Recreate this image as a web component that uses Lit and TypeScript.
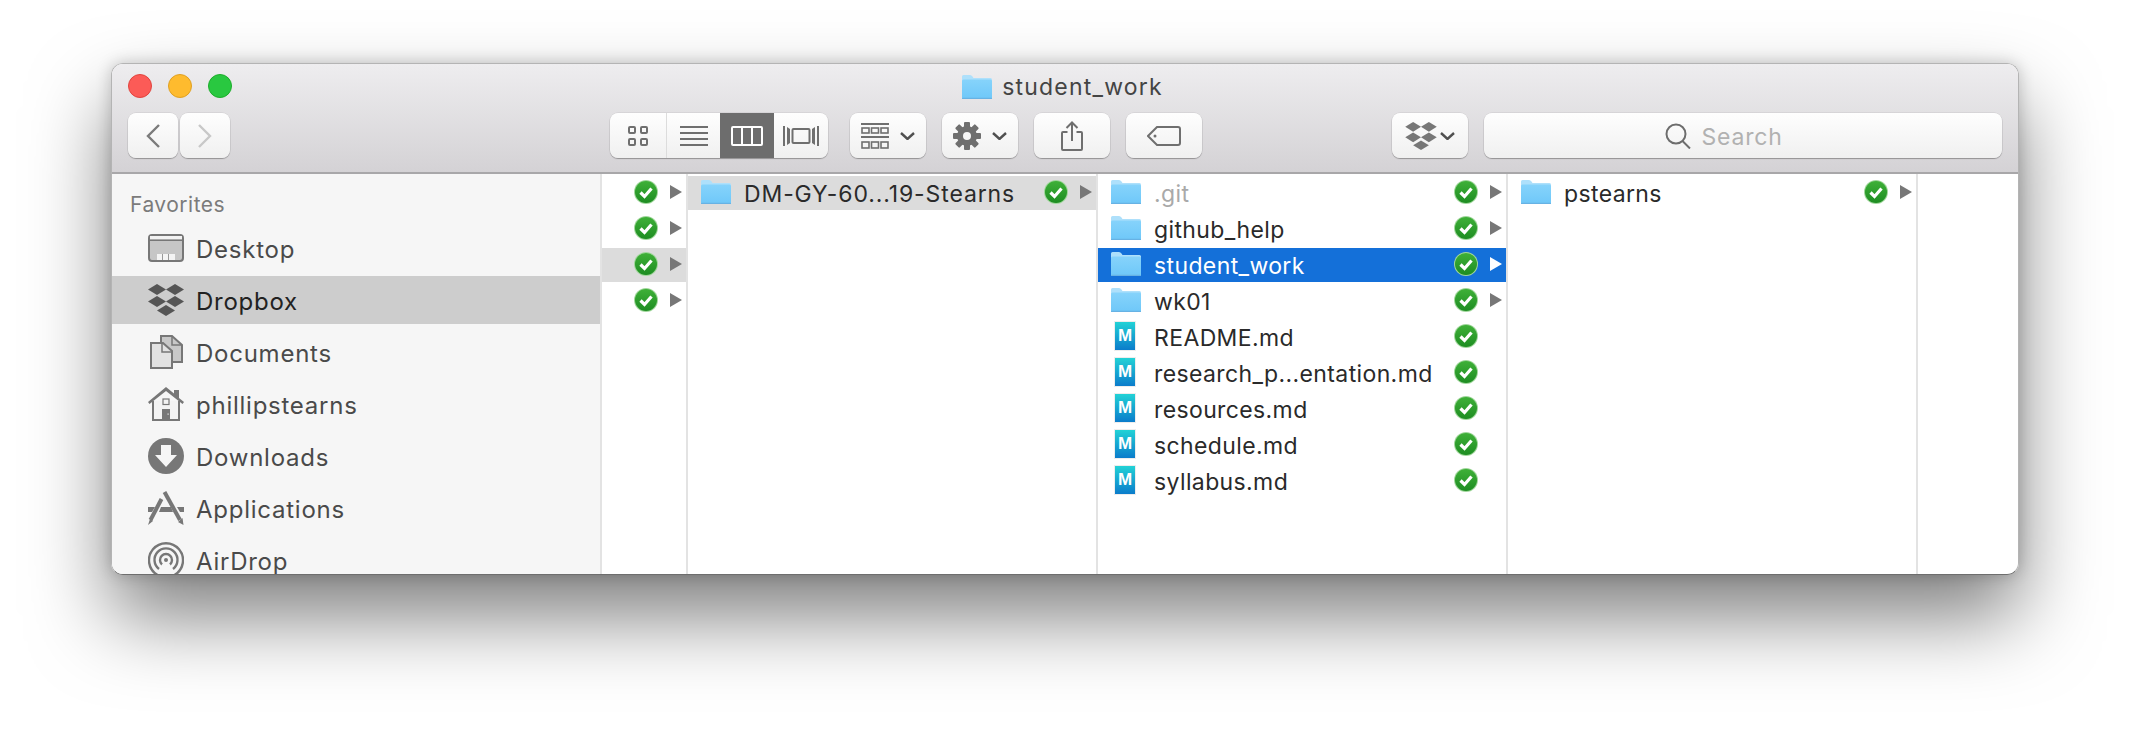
import { LitElement, css, html } from 'lit';
import { customElement } from 'lit/decorators.js';

const folderIcon = () => html`
  <svg class="file-icon" width="30" height="24" viewBox="0 0 30 24">
    <defs>
      <linearGradient id="folder-fill" x1="0" y1="0" x2="0" y2="1">
        <stop offset="0" stop-color="#86d3fb" />
        <stop offset="1" stop-color="#6fc8f9" />
      </linearGradient>
    </defs>
    <path d="M1 24 Q0 24 0 23 V1.5 Q0 0 1.5 0 H8 Q9.5 0 10.5 1.5 L11.5 3 H28.5 Q30 3 30 4.5 V23 Q30 24 29 24 Z" fill="#aee0fb" />
    <path d="M0 6 Q0 4.500 1.500 4.500 H28.500 Q30 4.500 30 6 V22.500 Q30 23.500 29 23.500 H1 Q0 23.500 0 22.500 Z" fill="url(#folder-fill)" />
    <rect x="0" y="22.700" width="30" height="1.300" rx=".6" fill="#67b2e4" />
  </svg>
`;

const checkBadge = () => html`
  <svg class="badge" width="24" height="24" viewBox="0 0 24 24">
    <defs>
      <linearGradient id="badge-fill" x1="0" y1="0" x2="0" y2="1">
        <stop offset="0" stop-color="#3fb038" />
        <stop offset="1" stop-color="#1e8d22" />
      </linearGradient>
    </defs>
    <circle cx="12" cy="12" r="12" fill="#9fd69a" />
    <circle cx="12" cy="12" r="11" fill="url(#badge-fill)" />
    <path d="M6.500 12.500 L10.500 16.500 L17.500 8.500" fill="none" stroke="#fff" stroke-width="3.200" />
  </svg>
`;

const markdownIcon = () => html`<span class="md"><span class="md-letter">M</span></span>`;

const dropboxLogo = (w: number, h: number) => html`
  <svg width=${w} height=${h} viewBox="0 0 36 32" fill="currentColor">
    <path d="M9 0 L18 5.500 L9 11 L0 5.500 Z" />
    <path d="M27 0 L36 5.500 L27 11 L18 5.500 Z" />
    <path d="M9 12 L18 17.500 L9 23 L0 17.500 Z" />
    <path d="M27 12 L36 17.500 L27 23 L18 17.500 Z" />
    <path d="M18 21 L27 26.500 L18 32 L9 26.500 Z" />
  </svg>
`;

const chevron = () => html`
  <svg class="chevron" width="15" height="8" viewBox="0 0 15 8">
    <path d="M1 1 L7.500 7 L14 1" fill="none" stroke="#505050" stroke-width="2.400" />
  </svg>
`;

const SIDEBAR_ICONS: Record<string, () => unknown> = {
  desktop: () => html`
    <svg width="36" height="28" viewBox="0 0 36 28">
      <rect x="1" y="1" width="34" height="26" rx="3" fill="#c6c6c6" stroke="#777" stroke-width="2" />
      <rect x="2" y="2" width="32" height="3.500" fill="#f2f2f2" />
      <rect x="2" y="5.500" width="32" height="1.500" fill="#777" />
      <rect x="9" y="20" width="18" height="6" fill="#f4f4f4" />
      <rect x="14" y="20" width="1" height="6" fill="#999" />
      <rect x="20" y="20" width="1" height="6" fill="#999" />
    </svg>
  `,
  dropbox: () => html`<span class="logo-dark">${dropboxLogo(36, 32)}</span>`,
  documents: () => html`
    <svg width="36" height="34" viewBox="0 0 36 34">
      <path d="M13 1 H24 L34 10 V27 H13 Z" fill="#c8c8c8" stroke="#777" stroke-width="2" />
      <path d="M24 1 V10 H34" fill="none" stroke="#777" stroke-width="1.500" />
      <path d="M3 8 H15 L24 16 V33 H3 Z" fill="#e2e2e2" stroke="#777" stroke-width="2" />
      <path d="M14 8 V17 H24" fill="none" stroke="#777" stroke-width="1.500" />
    </svg>
  `,
  home: () => html`
    <svg width="36" height="34" viewBox="0 0 36 34">
      <path d="M5 14 V33 H31 V14" fill="#f3f3f3" stroke="#777" stroke-width="2" />
      <path d="M0 15 L18 0 L26 6.500 V3 H31 V11 L36 15 L34.500 17 L18 4 L1.500 17 Z" fill="#777" />
      <rect x="15" y="12" width="6" height="5.500" fill="#f3f3f3" stroke="#777" stroke-width="1.200" />
      <rect x="14" y="22" width="8" height="11" fill="#777" />
      <rect x="19.500" y="26.500" width="1.200" height="1.200" fill="#eee" />
    </svg>
  `,
  downloads: () => html`
    <svg width="36" height="36" viewBox="0 0 36 36">
      <circle cx="18" cy="18" r="18" fill="#777" />
      <path d="M13 7 H23 V17 H29 L18 29 L7 17 H13 Z" fill="#f6f6f6" />
    </svg>
  `,
  applications: () => html`
    <svg width="36" height="34" viewBox="0 0 36 34">
      <path d="M0 16 H7 L4 21 H0 Z M13 16 H23 L25 21 H11 Z M29 16 H36 V21 H32 Z" fill="#777" />
      <path d="M13.500 8 L2.500 29" stroke="#777" stroke-width="4" fill="none" />
      <path d="M2 28 L0 34 L5 30 Z" fill="#777" />
      <path d="M16.500 1 L32 29" stroke="#777" stroke-width="4" fill="none" />
      <path d="M30 31 L35.500 34 L34.500 27 Z" fill="#777" />
    </svg>
  `,
  airdrop: () => html`
    <svg width="36" height="36" viewBox="0 0 36 36" fill="none" stroke="#777" stroke-width="2.400">
      <path d="M9.500 33 A17 17 0 1 1 26.500 33" />
      <path d="M11 27 A11.500 11.500 0 1 1 25 27" />
      <path d="M14 22.500 A6 6 0 1 1 22 22.500" />
      <circle cx="18" cy="18" r="2" fill="#777" stroke="none" />
    </svg>
  `,
};

const FAVORITES = [
  { icon: 'desktop', label: 'Desktop' },
  { icon: 'dropbox', label: 'Dropbox', active: true },
  { icon: 'documents', label: 'Documents' },
  { icon: 'home', label: 'phillipstearns' },
  { icon: 'downloads', label: 'Downloads' },
  { icon: 'applications', label: 'Applications' },
  { icon: 'airdrop', label: 'AirDrop' },
];

const FILES = [
  { name: '.git', dir: true, dim: true },
  { name: 'github_help', dir: true },
  { name: 'student_work', dir: true, selected: true },
  { name: 'wk01', dir: true },
  { name: 'README.md' },
  { name: 'research_p...entation.md' },
  { name: 'resources.md' },
  { name: 'schedule.md' },
  { name: 'syllabus.md' },
];

interface RowOpts {
  dir?: boolean;
  dim?: boolean;
  selected?: boolean;
  muted?: boolean;
  tracked?: boolean;
}

@customElement('app-root')
export class AppRoot extends LitElement {
  private row(name: string, opts: RowOpts = {}) {
    const cls = [
      'row',
      opts.selected ? 'selected' : '',
      opts.muted ? 'muted' : '',
      opts.dim ? 'dim' : '',
      opts.tracked ? 'tracked' : '',
    ].join(' ');
    return html`
      <div class=${cls}>
        <span class="icon-slot">${opts.dir ? folderIcon() : markdownIcon()}</span>
        <span class="name">${name}</span>
        ${checkBadge()}
        <span class=${opts.dir ? 'arrow' : 'arrow none'}></span>
      </div>
    `;
  }

  render() {
    return html`
      <div class="window">
        <header class="toolbar">
          <div class="titlebar">
            <div class="lights">
              <span class="light red"></span>
              <span class="light yellow"></span>
              <span class="light green"></span>
            </div>
            <div class="title">${folderIcon()}<span>student_work</span></div>
          </div>
          <div class="tools">
            <div class="nav">
              <button class="btn nav-btn">
                <svg width="14" height="24" viewBox="0 0 14 24"><path d="M13 1 L2 12 L13 23" fill="none" stroke="#7b7b7b" stroke-width="2.400" /></svg>
              </button>
              <button class="btn nav-btn">
                <svg width="14" height="24" viewBox="0 0 14 24"><path d="M1 1 L12 12 L1 23" fill="none" stroke="#c8c8c8" stroke-width="2.400" /></svg>
              </button>
            </div>
            <div class="btn views">
              <span class="seg seg-icons">
                <svg width="20" height="20" viewBox="0 0 20 20" fill="none" stroke="#6f6f6f" stroke-width="2">
                  <rect x="1" y="1" width="6" height="6" rx="1" /><rect x="13" y="1" width="6" height="6" rx="1" />
                  <rect x="1" y="13" width="6" height="6" rx="1" /><rect x="13" y="13" width="6" height="6" rx="1" />
                </svg>
              </span>
              <span class="seg seg-list">
                <svg width="28" height="20" viewBox="0 0 28 20" fill="#6f6f6f">
                  <rect y="0" width="28" height="2" /><rect y="6" width="28" height="2" />
                  <rect y="12" width="28" height="2" /><rect y="18" width="28" height="2" />
                </svg>
              </span>
              <span class="seg seg-columns">
                <svg width="32" height="20" viewBox="0 0 32 20" fill="none" stroke="#fff" stroke-width="2">
                  <rect x="1" y="1" width="30" height="18" rx="1" /><path d="M11 1 V19 M21 1 V19" />
                </svg>
              </span>
              <span class="seg seg-cover">
                <svg width="36" height="20" viewBox="0 0 36 20" fill="#6f6f6f">
                  <rect x="9.500" y="3" width="17" height="14" rx="1" fill="none" stroke="#6f6f6f" stroke-width="2" />
                  <rect x="0" y="0" width="2" height="20" /><path d="M4 1 L7 3 V17 L4 19 Z" />
                  <rect x="34" y="0" width="2" height="20" /><path d="M32 1 L29 3 V17 L32 19 Z" />
                </svg>
              </span>
            </div>
            <div class="btn wide group">
              <svg width="28" height="26" viewBox="0 0 28 26" fill="none" stroke="#6f6f6f" stroke-width="1.600">
                <path d="M0 1 H28 M0 14 H28" stroke-width="2" />
                <rect x="1" y="5" width="7" height="5" /><rect x="10.500" y="5" width="7" height="5" /><rect x="20" y="5" width="7" height="5" />
                <rect x="1" y="19" width="7" height="6" /><rect x="10.500" y="19" width="7" height="6" /><rect x="20" y="19" width="7" height="6" />
              </svg>
              ${chevron()}
            </div>
            <div class="btn wide action">
              <svg width="28" height="28" viewBox="0 0 28 28" fill="#6f6f6f">
                <rect x="11" y="0" width="6" height="28" rx="1" />
                <rect x="11" y="0" width="6" height="28" rx="1" transform="rotate(45 14 14)" />
                <rect x="11" y="0" width="6" height="28" rx="1" transform="rotate(90 14 14)" />
                <rect x="11" y="0" width="6" height="28" rx="1" transform="rotate(135 14 14)" />
                <circle cx="14" cy="14" r="10" />
                <circle cx="14" cy="14" r="4" fill="#f6f6f6" />
              </svg>
              ${chevron()}
            </div>
            <div class="btn wide">
              <svg width="22" height="30" viewBox="0 0 22 30" fill="none" stroke="#6f6f6f" stroke-width="2">
                <path d="M6.500 11 H2 Q1 11 1 12 V28 Q1 29 2 29 H20 Q21 29 21 28 V12 Q21 11 20 11 H15.500" />
                <path d="M11 20 V2 M5.500 7 L11 1.500 L16.500 7" />
              </svg>
            </div>
            <div class="btn wide">
              <svg width="34" height="20" viewBox="0 0 34 20" fill="none" stroke="#6f6f6f" stroke-width="2">
                <path d="M10 1 H31 Q33 1 33 3 V17 Q33 19 31 19 H10 L1 10 Z" />
                <circle cx="8" cy="10" r="1.500" fill="#6f6f6f" stroke="none" />
              </svg>
            </div>
            <div class="btn dbx">
              <span class="logo-gray">${dropboxLogo(32, 28)}</span>
              ${chevron()}
            </div>
            <div class="btn search">
              <svg width="26" height="26" viewBox="0 0 26 26" fill="none" stroke="#6d6d6d" stroke-width="2">
                <circle cx="11" cy="11" r="9.500" /><path d="M17.500 18 L25 25.500" />
              </svg>
              <span class="search-label">Search</span>
            </div>
          </div>
        </header>
        <div class="body">
          <nav class="sidebar">
            <div class="section"><span>Favorites</span></div>
            ${FAVORITES.map(
              (item) => html`
                <div class=${item.active ? 'fav active' : 'fav'}>
                  <span class="fav-icon">${SIDEBAR_ICONS[item.icon]()}</span>
                  <span class="fav-label">${item.label}</span>
                </div>
              `
            )}
          </nav>
          <section class="col narrow">
            ${this.row('', { dir: true })}
            ${this.row('', { dir: true })}
            ${this.row('', { dir: true, muted: true })}
            ${this.row('', { dir: true })}
          </section>
          <section class="col">${this.row('DM-GY-60...19-Stearns', { dir: true, muted: true, tracked: true })}</section>
          <section class="col">${FILES.map((f) => this.row(f.name, f))}</section>
          <section class="col">${this.row('pstearns', { dir: true })}</section>
          <section class="col last"></section>
        </div>
      </div>
    `;
  }

  static styles = css`
    :host {
      display: block;
      height: 734px;
      overflow: hidden;
      background: #fff;
      font-family: 'Inter', 'Liberation Sans', sans-serif;
    }

    .window {
      box-sizing: border-box;
      position: relative;
      margin: 63px 0 0 111px;
      width: 1908px;
      height: 512px;
      display: flex;
      flex-direction: column;
      overflow: hidden;
      border-radius: 12px;
      border: 1px solid #b4b4b4;
      border-bottom-color: #6e6e6e;
      background: #fff;
    }

    :host::before {
      content: '';
      position: absolute;
      left: 111px;
      top: 63px;
      width: 1908px;
      height: 512px;
      border-radius: 12px;
      box-shadow: 0 42px 80px rgba(0, 0, 0, 0.5), 0 0 16px rgba(0, 0, 0, 0.2);
    }

    .toolbar {
      flex: none;
      height: 110px;
      box-sizing: border-box;
      background: linear-gradient(#eeedef, #d4d2d5);
      border-bottom: 2px solid #a8a7a9;
    }

    .titlebar {
      position: relative;
      height: 49px;
      display: flex;
      align-items: center;
      justify-content: center;
    }

    .lights {
      position: absolute;
      left: 16px;
      top: 10px;
      display: flex;
      gap: 16px;
    }

    .light {
      width: 24px;
      height: 24px;
      border-radius: 50%;
      box-sizing: border-box;
    }

    .red { background: #fc5b57; border: 1px solid #e0443e; }
    .yellow { background: #febb2e; border: 1px solid #dfa023; }
    .green { background: #29c840; border: 1px solid #1dad2b; }

    .title {
      display: flex;
      align-items: center;
      gap: 10px;
      margin-left: -5px;
      margin-top: -3px;
      font-size: 23px;
      letter-spacing: 1.2px;
      color: #444;
    }

    .tools {
      display: flex;
      align-items: stretch;
      height: 45px;
      padding-left: 16px;
    }

    .btn {
      display: flex;
      align-items: center;
      justify-content: center;
      box-sizing: border-box;
      height: 45px;
      padding: 0;
      border: none;
      border-radius: 8px;
      background: linear-gradient(#fefefe, #f0f0f0);
      box-shadow: 0 1px 1px rgba(0, 0, 0, 0.28), 0 0 0 0.5px rgba(0, 0, 0, 0.1);
    }

    .nav {
      display: flex;
      gap: 2px;
    }

    .nav-btn {
      width: 50px;
    }

    .views {
      width: 218px;
      margin-left: 380px;
      overflow: hidden;
      justify-content: flex-start;
    }

    .seg {
      height: 100%;
      display: flex;
      align-items: center;
      justify-content: center;
    }

    .seg-icons { width: 56px; border-right: 1px solid #dcdcdc; }
    .seg-list { width: 53px; }
    .seg-columns { width: 54px; background: #6d6d6d; }
    .seg-cover { width: 54px; }

    .wide {
      width: 76px;
      margin-left: 16px;
    }

    .group {
      margin-left: 22px;
      gap: 11px;
    }

    .action {
      gap: 11px;
    }

    .dbx {
      width: 76px;
      margin-left: 190px;
      gap: 3px;
    }

    .logo-gray { display: flex; color: #777; }
    .logo-dark { display: flex; color: #555; }

    .search {
      width: 518px;
      margin-left: 16px;
      padding-right: 38px;
      gap: 10px;
      font-size: 23px;
      color: #b1b1b1;
    }

    .search-label {
      padding-top: 2px;
      letter-spacing: 0.8px;
    }

    .body {
      flex: 1;
      min-height: 0;
      display: flex;
    }

    .sidebar {
      flex: none;
      box-sizing: border-box;
      width: 488px;
      padding-top: 16px;
      display: flex;
      flex-direction: column;
      gap: 4px;
      overflow: hidden;
      background: #f6f6f6;
      color: #4a4a4a;
      font-size: 24px;
      letter-spacing: 0.75px;
    }

    .section {
      flex: none;
      height: 28px;
      margin-bottom: 2px;
      padding-left: 18px;
      display: flex;
      align-items: center;
      font-size: 21px;
      letter-spacing: 0.5px;
      color: #7b7b7b;
    }

    .fav {
      flex: none;
      height: 48px;
      display: flex;
      align-items: center;
      padding-left: 36px;
    }

    .fav.active {
      background: #cdcdcd;
      color: #222;
    }

    .fav-icon {
      width: 36px;
      margin-right: 12px;
      display: flex;
      justify-content: center;
    }

    .fav-label {
      padding-top: 2px;
    }

    .col {
      flex: none;
      box-sizing: border-box;
      width: 410px;
      padding-top: 2px;
      display: flex;
      flex-direction: column;
      gap: 2px;
      border-left: 2px solid #e3e3e3;
    }

    .col.narrow {
      width: 86px;
    }

    .col.last {
      flex: 1;
    }

    .row {
      flex: none;
      height: 34px;
      display: flex;
      align-items: center;
      padding-right: 4px;
      font-size: 23px;
      letter-spacing: 0.38px;
      color: #2a2a2a;
    }

    .row.tracked {
      letter-spacing: 0.88px;
    }

    .narrow .row {
      justify-content: flex-end;
    }

    .narrow .icon-slot,
    .narrow .name {
      display: none;
    }

    .row.muted { background: #dcdcdc; }
    .row.dim .name { color: #a9a9a9; }
    .row.selected { background: #1470d9; color: #fff; }
    .row.selected .arrow { border-left-color: #fff; }

    .icon-slot {
      flex: none;
      width: 56px;
      box-sizing: border-box;
      padding-left: 13px;
      padding-bottom: 2px;
      display: flex;
      align-items: center;
    }

    .name {
      flex: 1;
      min-width: 0;
      padding-top: 2px;
      white-space: nowrap;
    }

    .badge {
      flex: none;
      margin-bottom: 2px;
    }

    .arrow {
      flex: none;
      width: 0;
      height: 0;
      margin-left: 12px;
      margin-bottom: 2px;
      border-left: 12px solid #777;
      border-top: 7px solid transparent;
      border-bottom: 7px solid transparent;
    }

    .arrow.none {
      visibility: hidden;
    }

    .md {
      display: flex;
      align-items: center;
      justify-content: center;
      width: 20px;
      height: 28px;
      margin-left: 4px;
      background: linear-gradient(#22d2d6, #0b7ccb);
      box-shadow: 0 0 0 1px rgba(0, 0, 0, 0.07);
    }

    .md-letter {
      color: #fff;
      letter-spacing: 0;
      font: 700 17px 'Liberation Sans', sans-serif;
    }
  `;
}
